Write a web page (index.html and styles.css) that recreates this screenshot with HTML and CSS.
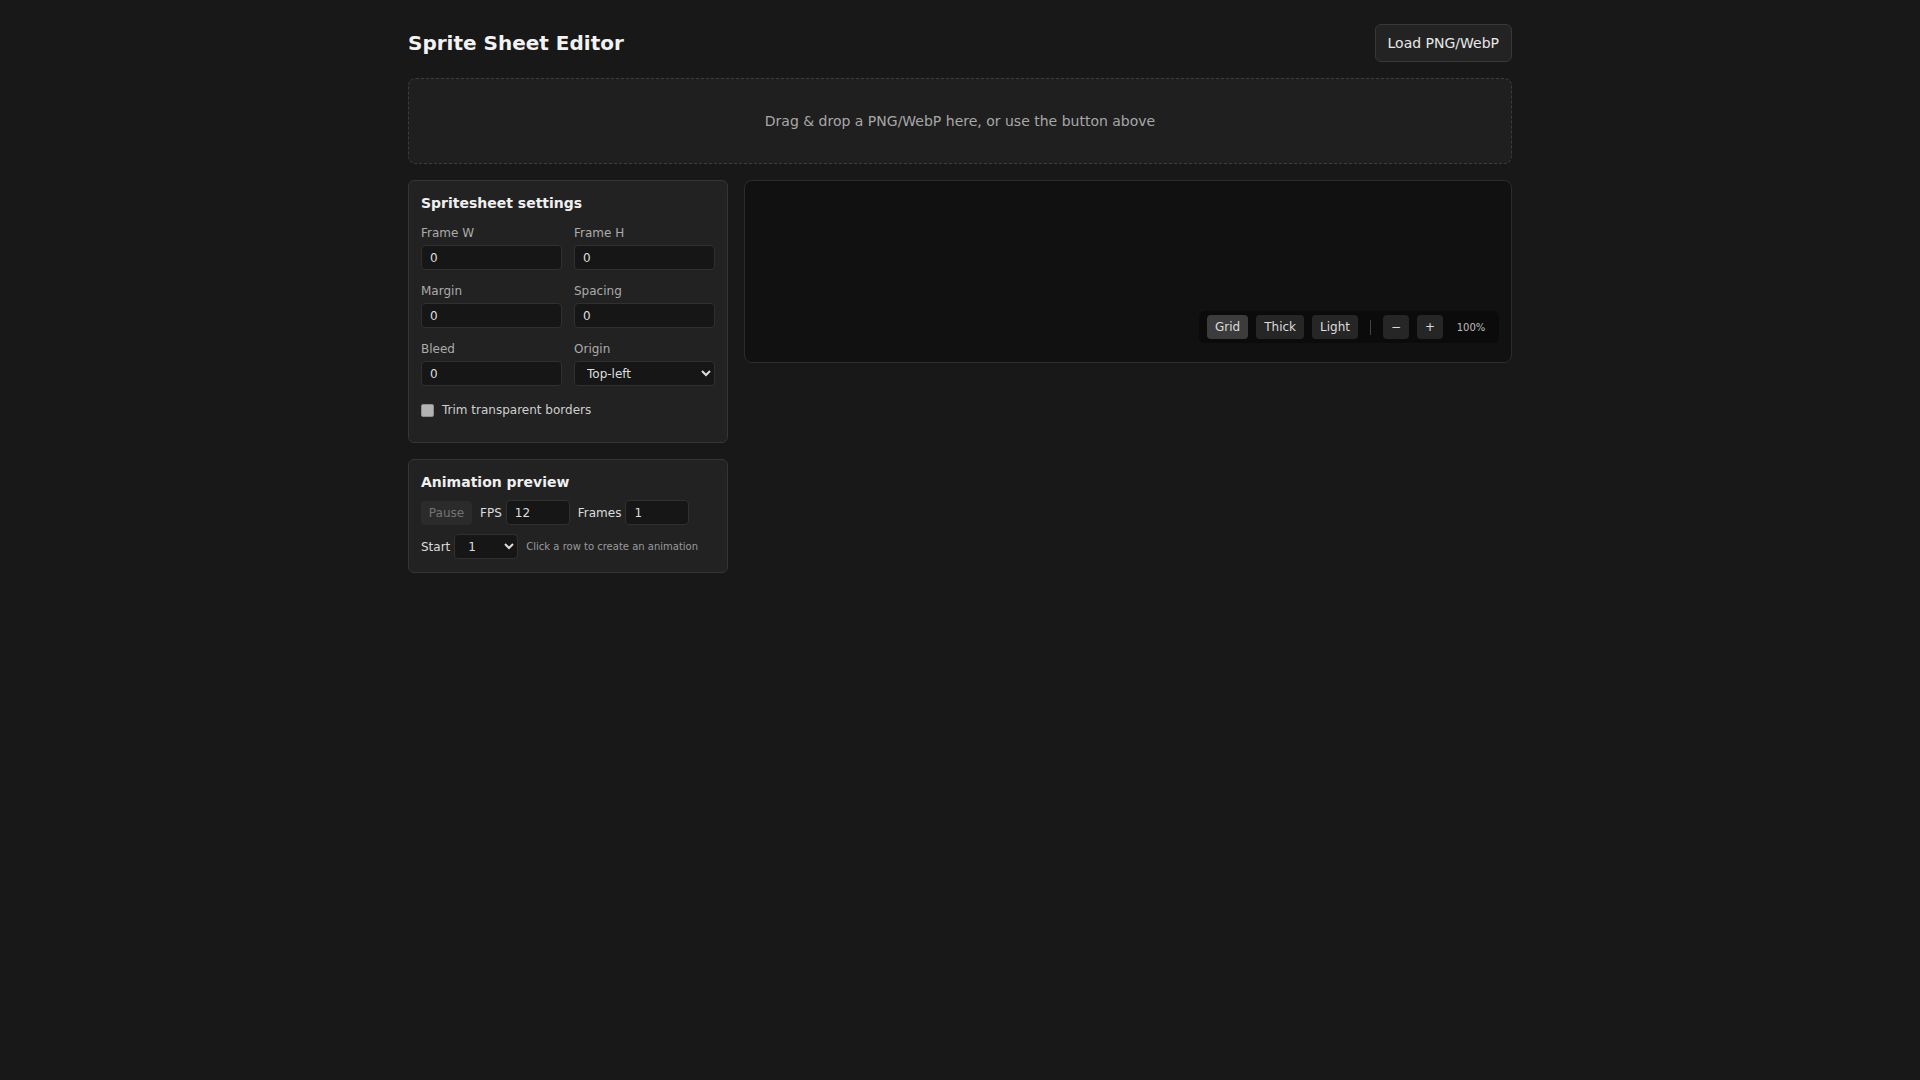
FILE: index.html
```html
<!DOCTYPE html>
<html lang="en">
<head>
  <meta charset="UTF-8">
  <meta name="viewport" content="width=device-width, initial-scale=1.0">
  <title>Sprite Sheet Editor</title>
  <link rel="stylesheet" href="styles.css">
</head>
<body>
  <div class="app">
    <header class="topbar">
      <h1>Sprite Sheet Editor</h1>
      <button class="load-btn">Load PNG/WebP</button>
    </header>

    <div class="dropzone">Drag &amp; drop a PNG/WebP here, or use the button above</div>

    <div class="workspace">
      <aside class="sidebar">
        <section class="panel">
          <h2>Spritesheet settings</h2>
          <div class="fields">
            <label class="field"><span>Frame W</span><input type="text" value="0"></label>
            <label class="field"><span>Frame H</span><input type="text" value="0"></label>
            <label class="field"><span>Margin</span><input type="text" value="0"></label>
            <label class="field"><span>Spacing</span><input type="text" value="0"></label>
            <label class="field"><span>Bleed</span><input type="text" value="0"></label>
            <label class="field"><span>Origin</span>
              <select>
                <option>Top-left</option>
                <option>Center</option>
                <option>Bottom-center</option>
              </select>
            </label>
          </div>
          <label class="check"><input type="checkbox"> Trim transparent borders</label>
        </section>

        <section class="panel">
          <h2 class="anim-title">Animation preview</h2>
          <div class="anim-row">
            <button class="pause-btn" disabled>Pause</button>
            <label class="inline">FPS <input type="text" value="12"></label>
            <label class="inline">Frames <input type="text" value="1"></label>
          </div>
          <div class="anim-row">
            <label class="inline">Start
              <select class="start-select">
                <option>1</option>
              </select>
            </label>
            <span class="hint">Click a row to create an animation</span>
          </div>
        </section>
      </aside>

      <div class="stage">
        <div class="toolbar">
          <button class="tool active">Grid</button>
          <button class="tool">Thick</button>
          <button class="tool">Light</button>
          <span class="sep"></span>
          <button class="tool square">&minus;</button>
          <button class="tool square">+</button>
          <span class="zoom-level">100%</span>
        </div>
      </div>
    </div>
  </div>
</body>
</html>
```

FILE: styles.css
```css
* {
  box-sizing: border-box;
}

body {
  margin: 0;
  background: #181818;
  color: #e6e6e6;
  font-family: "DejaVu Sans", Verdana, sans-serif;
}

.app {
  width: 1104px;
  margin: 0 auto;
  padding-top: 24px;
}

.topbar {
  display: flex;
  justify-content: space-between;
  align-items: center;
  height: 38px;
}

h1 {
  margin: 0;
  font-size: 20px;
  font-weight: bold;
  color: #f2f2f2;
}

.load-btn {
  height: 38px;
  padding: 0 12px;
  background: #232323;
  border: 1px solid #383838;
  border-radius: 6px;
  color: #e8e8e8;
  font-family: inherit;
  font-size: 14px;
}

.dropzone {
  margin-top: 16px;
  height: 86px;
  display: flex;
  align-items: center;
  justify-content: center;
  background: #1f1f1f;
  border: 1px dashed #3c3c3c;
  border-radius: 8px;
  color: #a8a8a8;
  font-size: 14px;
}

.workspace {
  margin-top: 16px;
  display: grid;
  grid-template-columns: 320px 1fr;
  gap: 16px;
  align-items: start;
}

.sidebar {
  display: flex;
  flex-direction: column;
  gap: 16px;
}

.panel {
  background: #222;
  border: 1px solid #353535;
  border-radius: 6px;
  padding: 14px 12px 13px;
}

.panel h2 {
  margin: 0 0 14px;
  font-size: 14px;
  line-height: 17px;
  color: #f0f0f0;
}

.panel h2.anim-title {
  margin-bottom: 9px;
}

.fields {
  display: grid;
  grid-template-columns: 1fr 1fr;
  gap: 14px 12px;
}

.field span {
  display: block;
  font-size: 12px;
  line-height: 15px;
  margin-bottom: 4px;
  color: #ababab;
}

input[type="text"],
select {
  height: 25px;
  background: #161616;
  border: 1px solid #303030;
  border-radius: 4px;
  color: #dedede;
  font-family: inherit;
  font-size: 12px;
  padding: 0 8px;
  color-scheme: dark;
}

.field input,
.field select {
  width: 100%;
}

.check {
  display: flex;
  align-items: center;
  gap: 8px;
  margin: 17px 0 11px;
  font-size: 12px;
  line-height: 15px;
  color: #cfcfcf;
}

.check input {
  appearance: none;
  width: 13px;
  height: 13px;
  margin: 0;
  background: #b3b3b3;
  border: 1px solid #8e8e8e;
  border-radius: 2px;
}

.anim-row {
  display: flex;
  align-items: center;
  gap: 8px;
  height: 25px;
}

.anim-row + .anim-row {
  margin-top: 9px;
}

.pause-btn {
  width: 51px;
  height: 24px;
  padding: 0;
  background: #2b2b2b;
  border: none;
  border-radius: 4px;
  color: #737373;
  font-family: inherit;
  font-size: 12px;
}

.inline {
  display: flex;
  align-items: center;
  gap: 4px;
  font-size: 12px;
  color: #dcdcdc;
}

.inline input {
  width: 64px;
}

.start-select {
  width: 64px;
  padding-left: 9px;
}

.hint {
  font-size: 10px;
  color: #9a9a9a;
}

.stage {
  position: relative;
  height: 183px;
  background: #111;
  border: 1px solid #2c2c2c;
  border-radius: 8px;
}

.toolbar {
  position: absolute;
  right: 12px;
  bottom: 19px;
  display: flex;
  align-items: center;
  gap: 8px;
  padding: 4px 8px;
  background: #0b0b0b;
  border-radius: 6px;
}

.tool {
  height: 24px;
  padding: 0 8px;
  background: #262626;
  border: none;
  border-radius: 4px;
  color: #dcdcdc;
  font-family: inherit;
  font-size: 12px;
}

.tool.active {
  background: #3c3c3c;
}

.tool.square {
  width: 26px;
  padding: 0;
}

.sep {
  width: 1px;
  height: 15px;
  margin: 0 4px;
  background: #444;
}

.zoom-level {
  min-width: 40px;
  text-align: center;
  font-size: 10px;
  color: #bdbdbd;
}
```
